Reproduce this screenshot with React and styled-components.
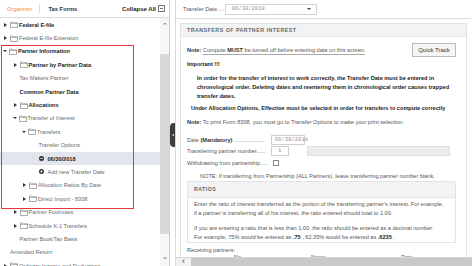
import React from 'react';
import styled, { createGlobalStyle } from 'styled-components';

const GlobalStyle = createGlobalStyle`
  html, body {
    margin: 0;
    padding: 0;
    background: #fff;
  }
  body {
    font-family: "Liberation Sans", Arial, sans-serif;
    font-size: 5.6px;
    color: #555;
  }
`;

const treeRows = [
  { depth: 0, kind: 'closed', label: 'Federal E-file', bold: true },
  { depth: 0, kind: 'closed', label: 'Federal E-file Extension' },
  { depth: 0, kind: 'open', label: 'Partner Information', bold: true },
  { depth: 1, kind: 'closed', label: 'Partner by Partner Data', bold: true },
  { depth: 1, kind: 'leaf', label: 'Tax Matters Partner' },
  { depth: 1, kind: 'leaf', label: 'Common Partner Data', bold: true },
  { depth: 1, kind: 'closed', label: 'Allocations', bold: true },
  { depth: 1, kind: 'open', label: 'Transfer of Interest' },
  { depth: 2, kind: 'open', label: 'Transfers' },
  { depth: 3, kind: 'leaf', label: 'Transfer Options' },
  { depth: 3, kind: 'minus', label: '06/30/2018', bold: true, selected: true },
  { depth: 3, kind: 'plus', label: 'Add new Transfer Date' },
  { depth: 2, kind: 'closed', label: 'Allocation Ratios By Date' },
  { depth: 2, kind: 'closed', label: 'Direct Import - 8308' },
  { depth: 1, kind: 'closed', label: 'Partner Footnotes' },
  { depth: 1, kind: 'closed', label: 'Schedule K-1 Transfers' },
  { depth: 1, kind: 'leaf', label: 'Partner Book/Tax Basis' },
  { depth: 0, kind: 'leaf', label: 'Amended Return' },
  { depth: 0, kind: 'closed', label: 'Ordinary Income and Deductions' },
];

const FolderIcon = () => (
  <svg width="8" height="7" viewBox="0 0 16 14">
    <path d="M1 2 H6 L7.5 3.5 H15 V13 H1 Z" fill="none" stroke="#666" strokeWidth="1.1" />
    <path d="M1 5 H15" stroke="#666" strokeWidth="0.9" />
  </svg>
);

const CircleIcon = ({ plus }) => (
  <svg width="5" height="5" viewBox="0 0 10 10">
    <circle cx="5" cy="5" r="5" fill="#333" />
    <path d="M2.5 5 H7.5" stroke="#fff" strokeWidth="1.6" />
    {plus && <path d="M5 2.5 V7.5" stroke="#fff" strokeWidth="1.6" />}
  </svg>
);

function TreeNode({ row }) {
  const isFolder = row.kind === 'open' || row.kind === 'closed';
  return (
    <TreeRow $depth={row.depth} $selected={row.selected}>
      {isFolder ? <Caret $open={row.kind === 'open'} /> : <CaretSpace />}
      {isFolder && (
        <IconSlot>
          <FolderIcon />
        </IconSlot>
      )}
      {(row.kind === 'minus' || row.kind === 'plus') && (
        <IconSlot>
          <CircleIcon plus={row.kind === 'plus'} />
        </IconSlot>
      )}
      <TreeLabel $bold={row.bold}>{row.label}</TreeLabel>
    </TreeRow>
  );
}

export default function App() {
  return (
    <>
      <GlobalStyle />
      <Shell>
        <LeftPanel>
          <PanelHeader>
            <HeaderTab $active>Organizer</HeaderTab>
            <HeaderDivider />
            <HeaderTab>Tax Forms</HeaderTab>
            <CollapseAll>
              Collapse All
              <CollapseBox />
            </CollapseAll>
          </PanelHeader>
          <TreeArea>
            <TreeList>
              {treeRows.map((row) => (
                <TreeNode key={row.label} row={row} />
              ))}
              <RedFrame />
            </TreeList>
            <VScroll>
              <ScrollArrow>&#x2303;</ScrollArrow>
              <VTrack>
                <VThumb />
              </VTrack>
              <ScrollArrow $down>&#x2304;</ScrollArrow>
            </VScroll>
          </TreeArea>
        </LeftPanel>

        <Splitter>
          <SplitHandle />
        </Splitter>

        <RightPanel>
          <TopBar>
            <TopLabel>Transfer Date ...</TopLabel>
            <SelectBox>
              <MonoValue>06/30/2018</MonoValue>
              <SelectArrow />
            </SelectBox>
          </TopBar>

          <Content>
            <Card>
              <CardHeader>TRANSFERS OF PARTNER INTEREST</CardHeader>
              <CardBody>
                <NoteRow>
                  <NoteText>
                    <b>Note:</b> <Underlined>Compute <Strong>MUST</Strong> be turned off before entering data on this screen.</Underlined>
                  </NoteText>
                  <QuickTrack type="button">Quick Track</QuickTrack>
                </NoteRow>

                <Important>Important !!!</Important>
                <BoldPara>
                  In order for the transfer of interest to work correctly, the Transfer Date must be entered in
                  chronological order. Deleting dates and reentering them in chronological order causes trapped
                  transfer dates.
                </BoldPara>
                <BoldLine>Under Allocation Options, Effective must be selected in order for transfers to compute correctly</BoldLine>
                <PlainLine>
                  <b>Note:</b> To print Form 8308, you must go to Transfer Options to make your print selection.
                </PlainLine>

                <FieldRow $top={9}>
                  <FieldLabel>
                    Date <b>(Mandatory)</b> ....................
                  </FieldLabel>
                  <TextInput $width={34}>
                    <MonoValue>06/30/2018</MonoValue>
                  </TextInput>
                </FieldRow>
                <FieldRow>
                  <FieldLabel>Transferring partner number......</FieldLabel>
                  <TextInput $width={18} $center>
                    <MonoValue>1</MonoValue>
                  </TextInput>
                  <DisabledInput />
                </FieldRow>
                <FieldRow>
                  <FieldLabel>Withdrawing from partnership ....</FieldLabel>
                  <CheckBox />
                </FieldRow>
                <IndentNote>
                  NOTE: If transferring from Partnership (ALL Partners), leave transferring partner number blank.
                </IndentNote>

                <RatioCard>
                  <RatioHeader>RATIOS</RatioHeader>
                  <RatioBody>
                    <p>
                      Enter the ratio of interest transferred as the portion of the transferring partner's interest. For example,
                      <br />
                      if a partner is transferring all of his interest, the ratio entered should total to 1.00.
                    </p>
                    <p>
                      If you are entering a ratio that is less than 1.00, the ratio should be entered as a decimal number.
                      <br />
                      For example, 75% would be entered as <Strong>.75</Strong> , 62.35% would be entered as <Strong>.6235</Strong> .
                    </p>
                  </RatioBody>
                </RatioCard>

                <Receiving>Receiving partners:</Receiving>
                <ColumnHeads>
                  <ColumnHead>No.</ColumnHead>
                  <ColumnHead>Name</ColumnHead>
                  <ColumnHead>Date</ColumnHead>
                </ColumnHeads>
              </CardBody>
            </Card>
          </Content>

          <HScroll>
            <HArrow>&lsaquo;</HArrow>
            <HThumb />
          </HScroll>
        </RightPanel>
      </Shell>
    </>
  );
}

const Shell = styled.div`
  display: flex;
  width: 472px;
  height: 266px;
  overflow: hidden;
  background: #fff;
`;

const LeftPanel = styled.div`
  display: flex;
  flex-direction: column;
  width: 169px;
  flex: none;
  border-right: 1px solid #cfcfcf;
`;

const PanelHeader = styled.div`
  display: flex;
  align-items: center;
  height: 17px;
  flex: none;
  padding: 0 4px 0 7px;
  border-bottom: 1px solid #dcdcdc;
`;

const HeaderTab = styled.span`
  font-size: 5.8px;
  font-weight: ${(p) => (p.$active ? 'normal' : 'bold')};
  color: ${(p) => (p.$active ? '#f08a2c' : '#333')};
`;

const HeaderDivider = styled.span`
  width: 1px;
  height: 9px;
  background: #ddd;
  margin: 0 8px 0 7px;
`;

const CollapseAll = styled.span`
  display: flex;
  align-items: center;
  gap: 2px;
  margin-left: auto;
  font-size: 6px;
  font-weight: bold;
  color: #222;
`;

const CollapseBox = styled.span`
  position: relative;
  width: 5px;
  height: 5px;
  border: 1px solid #777;
  &::after {
    content: '';
    position: absolute;
    left: 1px;
    right: 1px;
    top: 2px;
    height: 1px;
    background: #777;
  }
`;

const TreeArea = styled.div`
  display: flex;
  flex: 1;
  min-height: 0;
`;

const TreeList = styled.div`
  position: relative;
  flex: 1;
  overflow: hidden;
`;

const TreeRow = styled.div`
  display: flex;
  align-items: center;
  height: 13.4px;
  padding-left: ${(p) => 3 + p.$depth * 9.5}px;
  background: ${(p) => (p.$selected ? '#e2e5eb' : 'transparent')};
  white-space: nowrap;
`;

const Caret = styled.span`
  width: 0;
  height: 0;
  margin-right: ${(p) => (p.$open ? 2 : 3)}px;
  border-style: solid;
  border-color: transparent;
  ${(p) =>
    p.$open
      ? 'border-width: 2.5px 2.5px 0 2.5px; border-top-color: #333;'
      : 'border-width: 2.5px 0 2.5px 3px; border-left-color: #333; margin-left: 1px;'}
`;

const CaretSpace = styled.span`
  width: 7px;
  flex: none;
`;

const IconSlot = styled.span`
  display: flex;
  width: 9px;
  flex: none;
`;

const TreeLabel = styled.span`
  font-weight: ${(p) => (p.$bold ? 'bold' : 'normal')};
  color: ${(p) => (p.$bold ? '#222' : '#6a6a6a')};
`;

const RedFrame = styled.div`
  position: absolute;
  left: 1px;
  top: 27px;
  width: 131px;
  height: 162px;
  border: 1px solid #e0393e;
  pointer-events: none;
`;

const VScroll = styled.div`
  display: flex;
  flex-direction: column;
  width: 9px;
  background: #f6f6f6;
`;

const ScrollArrow = styled.span`
  height: 12px;
  line-height: ${(p) => (p.$down ? '6px' : '16px')};
  text-align: center;
  font-size: 7px;
  color: #555;
`;

const VTrack = styled.div`
  flex: 1;
  padding: 24px 0 20px;
  display: flex;
`;

const VThumb = styled.div`
  flex: 1;
  background: #d8d8d8;
`;

const Splitter = styled.div`
  position: relative;
  width: 5px;
  flex: none;
  border-right: 1px solid #d9d9d9;
`;

const SplitHandle = styled.div`
  position: absolute;
  left: 0;
  top: 123px;
  width: 5px;
  height: 24px;
  background: #3a3d42;
  border-radius: 4px 0 0 4px;
  &::after {
    content: '';
    position: absolute;
    left: 1.5px;
    top: 10.5px;
    border-style: solid;
    border-color: transparent;
    border-width: 1.5px 2px 1.5px 0;
    border-right-color: #fff;
  }
`;

const RightPanel = styled.div`
  display: grid;
  grid-template-rows: 19px minmax(0, 1fr) 9px;
  flex: 1;
  min-width: 0;
  height: 266px;
  overflow: hidden;
`;

const TopBar = styled.div`
  display: flex;
  align-items: center;
  padding-left: 7px;
  border-bottom: 1px solid #dedede;
`;

const TopLabel = styled.span`
  color: #555;
  width: 42px;
`;

const SelectBox = styled.div`
  display: flex;
  align-items: center;
  width: 92px;
  height: 11px;
  padding-left: 6px;
  border: 1px solid #d4d4d4;
  box-sizing: border-box;
`;

const MonoValue = styled.span`
  font-family: "Liberation Mono", "DejaVu Sans Mono", monospace;
  font-size: 5px;
  letter-spacing: 0.3px;
  color: #888;
`;

const SelectArrow = styled.span`
  margin-left: auto;
  margin-right: 5px;
  border-style: solid;
  border-color: transparent;
  border-width: 2.5px 2px 0 2px;
  border-top-color: #444;
`;

const Content = styled.div`
  overflow: hidden;
  padding: 4px 5px 0 4px;
`;

const Card = styled.div`
  border: 1px solid #e2e2e2;
`;

const CardHeader = styled.div`
  height: 12px;
  line-height: 12px;
  padding-left: 6px;
  background: #f2f3f5;
  border-bottom: 1px solid #e6e6e6;
  font-size: 5.2px;
  font-weight: bold;
  letter-spacing: 0.55px;
  color: #666;
`;

const CardBody = styled.div`
  padding: 5px 10px 0 6px;
`;

const NoteRow = styled.div`
  display: flex;
  align-items: center;
  justify-content: space-between;
  height: 15px;
`;

const NoteText = styled.span`
  color: #555;
  b {
    color: #333;
  }
`;

const Underlined = styled.span`
  padding-bottom: 1px;
  border-bottom: 1px solid #aaa;
`;

const Strong = styled.b`
  color: #222;
`;

const QuickTrack = styled.button`
  font-family: inherit;
  font-size: 6px;
  color: #333;
  background: #f5f5f5;
  border: 1px solid #b9b9b9;
  height: 14px;
  width: 44px;
  padding: 0;
`;

const Important = styled.div`
  margin-top: 4px;
  font-weight: bold;
  color: #222;
`;

const BoldPara = styled.p`
  margin: 7px 0 0 10px;
  font-weight: bold;
  color: #222;
  line-height: 9px;
`;

const BoldLine = styled.div`
  margin: 4px 0 0 4px;
  font-weight: bold;
  color: #222;
`;

const PlainLine = styled.div`
  margin-top: 8px;
  color: #555;
  b {
    color: #333;
  }
`;

const FieldRow = styled.div`
  display: flex;
  align-items: center;
  height: 11.5px;
  margin-top: ${(p) => p.$top || 0}px;
`;

const FieldLabel = styled.span`
  width: 84px;
  white-space: nowrap;
  color: #555;
  b {
    color: #333;
  }
`;

const TextInput = styled.span`
  display: flex;
  align-items: center;
  justify-content: ${(p) => (p.$center ? 'center' : 'flex-start')};
  width: ${(p) => p.$width}px;
  height: 10px;
  padding-left: ${(p) => (p.$center ? 0 : 3)}px;
  box-sizing: border-box;
  border: 1px solid #cfcfcf;
`;

const DisabledInput = styled.span`
  width: 143px;
  height: 10px;
  margin-left: 18px;
  background: #ececec;
  border: 1px solid #e0e0e0;
  box-sizing: border-box;
`;

const CheckBox = styled.span`
  width: 6px;
  height: 6px;
  margin-left: 2px;
  border: 1px solid #888;
  box-sizing: border-box;
`;

const IndentNote = styled.div`
  margin: 4px 0 0 13px;
  color: #555;
`;

const RatioCard = styled.div`
  margin-top: 2px;
  border: 1px solid #e4e4e4;
`;

const RatioHeader = styled.div`
  height: 15px;
  line-height: 15px;
  padding-left: 6px;
  background: #f2f3f5;
  border-bottom: 1px solid #e6e6e6;
  font-size: 5.2px;
  font-weight: bold;
  letter-spacing: 0.5px;
  color: #666;
`;

const RatioBody = styled.div`
  padding: 2px 6px 0;
  p {
    margin: 0;
    line-height: 9px;
    color: #555;
  }
  p + p {
    margin-top: 6px;
  }
`;

const Receiving = styled.div`
  margin-top: 4px;
  color: #555;
`;

const ColumnHeads = styled.div`
  display: grid;
  grid-template-columns: 47px 77px 90px auto;
  padding-top: 1px;
  &::before {
    content: '';
  }
`;

const ColumnHead = styled.span`
  color: #555;
`;

const HScroll = styled.div`
  display: flex;
  background: #f2f2f2;
  border-top: 1px solid #d6d6d6;
`;

const HArrow = styled.span`
  width: 15px;
  text-align: center;
  font-size: 9px;
  line-height: 7px;
  color: #333;
`;

const HThumb = styled.div`
  flex: 1;
  background: #c9c9c9;
`;
